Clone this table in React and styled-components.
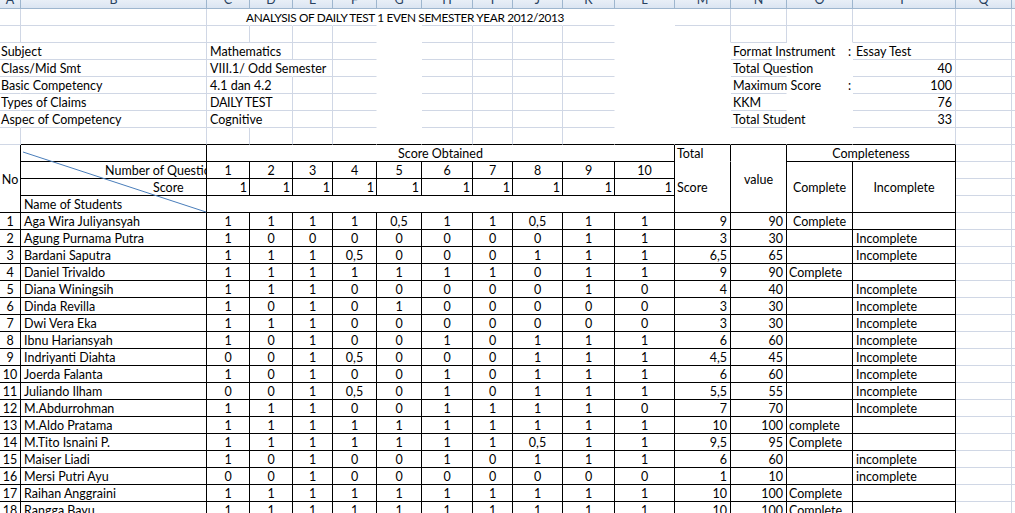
import React from "react";
import styled, { createGlobalStyle } from "styled-components";

// column widths A..R, rows are 17px like the sheet at 85% zoom
const COLS = [21, 186, 43, 43, 40, 44, 45, 51, 40, 50, 52, 60, 56, 56, 66, 103, 56, 60];
const LETTERS = "ABCDEFGHIJKLMNOPQR".split("");
const ROWS = 30;
const INK = "#000";
const GRID = "#d0d7e5";
const NONE = "transparent";

const GlobalStyle = createGlobalStyle`
  html, body { margin: 0; padding: 0; background: #fff; }
  body { overflow: hidden; font-family: Lato, "Liberation Sans", sans-serif; }
`;

const Page = styled.div`
  width: 1015px;
  height: 513px;
  overflow: hidden;
  background: #fff;
`;

const Sheet = styled.div`
  display: grid;
  grid-template-columns: ${COLS.map((w) => `${w}px`).join(" ")};
  grid-auto-rows: 17px;
  margin-top: -8px;
  font-size: 12.5px;
  color: #000;
`;

const ColHead = styled.div`
  grid-row: 1;
  display: flex;
  align-items: center;
  justify-content: center;
  background: linear-gradient(#f6f9fc, #dbe5f2);
  border-right: 1px solid #9eb6ce;
  border-bottom: 1px solid #9eb6ce;
  color: #27415f;
  line-height: 16px;
`;

const H = { left: "flex-start", center: "center", right: "flex-end" };
const V = { top: "flex-start", middle: "center", bottom: "flex-end" };

const Cell = styled.div`
  grid-column: ${(p) => p.$col + 1} / span ${(p) => p.$span};
  grid-row: ${(p) => p.$row + 2} / span ${(p) => p.$rows};
  display: flex;
  justify-content: ${(p) => H[p.$h]};
  align-items: ${(p) => V[p.$v]};
  padding: ${(p) => (p.$v === "middle" ? 2 : 0)}px ${(p) => p.$pr}px 0 ${(p) => p.$pl}px;
  border-right: 1px solid ${(p) => p.$r};
  border-bottom: 1px solid ${(p) => p.$b};
  overflow: ${(p) => (p.$clip ? "hidden" : "visible")};
  font-size: ${(p) => p.$size || "inherit"};
  letter-spacing: ${(p) => p.$ls}px;
  white-space: pre;
  line-height: 14px;
  min-width: 0;
`;

const Diagonal = styled.svg`
  grid-column: 2;
  grid-row: 10 / span 4;
  width: 100%;
  height: 100%;
  pointer-events: none;
`;

const students = [
  ["Aga Wira Juliyansyah", "1 1 1 1 0,5 1 1 0,5 1 1", "9", "90", "Complete", "", true],
  ["Agung Purnama Putra", "1 0 0 0 0 0 0 0 1 1", "3", "30", "", "Incomplete"],
  ["Bardani Saputra", "1 1 1 0,5 0 0 0 1 1 1", "6,5", "65", "", "Incomplete"],
  ["Daniel Trivaldo", "1 1 1 1 1 1 1 0 1 1", "9", "90", "Complete", ""],
  ["Diana Winingsih", "1 1 1 0 0 0 0 0 1 0", "4", "40", "", "Incomplete"],
  ["Dinda Revilla", "1 0 1 0 1 0 0 0 0 0", "3", "30", "", "Incomplete"],
  ["Dwi Vera Eka", "1 1 1 0 0 0 0 0 0 0", "3", "30", "", "Incomplete"],
  ["Ibnu Hariansyah", "1 0 1 0 0 1 0 1 1 1", "6", "60", "", "Incomplete"],
  ["Indriyanti Diahta", "0 0 1 0,5 0 0 0 1 1 1", "4,5", "45", "", "Incomplete"],
  ["Joerda Falanta", "1 0 1 0 0 1 0 1 1 1", "6", "60", "", "Incomplete"],
  ["Juliando Ilham", "0 0 1 0,5 0 1 0 1 1 1", "5,5", "55", "", "Incomplete"],
  ["M.Abdurrohman", "1 1 1 0 0 1 1 1 1 0", "7", "70", "", "Incomplete"],
  ["M.Aldo Pratama", "1 1 1 1 1 1 1 1 1 1", "10", "100", "complete", ""],
  ["M.Tito Isnaini P.", "1 1 1 1 1 1 1 0,5 1 1", "9,5", "95", "Complete", ""],
  ["Maiser Liadi", "1 0 1 0 0 1 0 1 1 1", "6", "60", "", "incomplete"],
  ["Mersi Putri Ayu", "0 0 1 0 0 0 0 0 0 0", "1", "10", "", "incomplete"],
  ["Raihan Anggraini", "1 1 1 1 1 1 1 1 1 1", "10", "100", "Complete", ""],
  ["Rangga Bayu", "1 1 1 1 1 1 1 1 1 1", "10", "100", "Complete", ""],
];

const info = [
  ["Subject", "Mathematics", "Format Instrument", ":", "Essay Test", "left"],
  ["Class/Mid Smt", "VIII.1/ Odd Semester", "Total Question", "", "40", "right"],
  ["Basic Competency", "4.1 dan 4.2", "Maximum Score", ":", "100", "right"],
  ["Types of Claims", "DAILY TEST", "KKM", "", "76", "right"],
  ["Aspec of Competency", "Cognitive", "Total Student", "", "33", "right"],
];

// white-filled columns hide the light gridlines around them
const plainCols = (row, col) =>
  (row <= 7 && (col === 6 || col === 11)) || (row >= 2 && row <= 7 && (col === 12 || col === 14));

// text spilling into the next cell hides the gridline it crosses
const overflowEdge = (row, col) => {
  if (row === 0) return col >= 2 && col <= 9;
  if (row >= 2 && row <= 6) {
    if (col === 0) return true;
    if (col === 2) return true;
    if (row === 3 && col === 3) return true;
    if (col === 13 && row !== 5) return true;
  }
  return false;
};

const gridRight = (row, col) => {
  if (plainCols(row, col) || plainCols(row, col + 1)) return NONE;
  if (overflowEdge(row, col)) return NONE;
  return GRID;
};

const gridBottom = (row, col) => {
  if (row === 7 && col >= 1 && col <= 15) return INK;
  if (plainCols(row, col) || plainCols(row + 1, col)) return NONE;
  return GRID;
};

function buildCells() {
  const cells = [];
  const put = (row, col, text = "", o = {}) =>
    cells.push({ row, col, text, span: 1, rows: 1, h: "left", v: "bottom", pl: 2, pr: 2, ls: 0, ...o });

  put(0, 2, "ANALYSIS OF DAILY TEST 1 EVEN SEMESTER YEAR 2012/2013", {
    pl: 39,
    size: "11.8px",
    ls: -0.35,
  });
  info.forEach(([a, c, n, colon, p, align], i) => {
    const row = 2 + i;
    put(row, 0, a, { pl: 1 });
    put(row, 2, c, { pl: 3, ls: c === c.toUpperCase() ? -0.3 : 0 });
    put(row, 13, n, { pl: 2 });
    if (colon) put(row, 14, colon, { h: "right", pr: 1 });
    put(row, 15, p, { h: align, pl: 3, pr: 3 });
  });

  // table header block
  put(8, 0, "No", { rows: 4, h: "center", v: "middle" });
  put(8, 1, "");
  put(9, 1, "Number of Questio", { pl: 84, clip: true });
  put(10, 1, "Score", { pl: 132 });
  put(11, 1, "Name of Students", { pl: 3 });
  put(8, 2, "Score Obtained", { span: 10, h: "center" });
  put(8, 12, "Total", { b: NONE, pl: 2 });
  put(9, 12, "Score", { rows: 3, v: "middle", pl: 2 });
  put(8, 13, "value", { rows: 4, h: "center", v: "middle" });
  put(8, 14, "Completeness", { span: 2, h: "center" });
  put(9, 14, "Complete", { rows: 3, h: "center", v: "middle" });
  put(9, 15, "Incomplete", { rows: 3, h: "center", v: "middle" });
  for (let i = 0; i < 10; i++) {
    put(9, 2 + i, String(i + 1), { h: "center" });
    put(10, 2 + i, "1", { h: "right", pr: 2 });
  }
  put(11, 2, "", { span: 10 });

  students.forEach(([name, scores, total, value, done, notDone, centered], k) => {
    const row = 12 + k;
    put(row, 0, String(k + 1), { h: "center", pl: 0, pr: 0 });
    put(row, 1, name, { pl: 3 });
    scores.split(" ").forEach((s, i) => put(row, 2 + i, s, { h: "center" }));
    put(row, 12, total, { h: "right", pr: 3 });
    put(row, 13, value, { h: "right", pr: 3 });
    put(row, 14, done, { h: centered ? "center" : "left", pl: 2 });
    put(row, 15, notDone, { pl: 3 });
  });

  // fill empty cells, respecting spans
  const taken = Array.from({ length: ROWS }, () => Array(COLS.length).fill(false));
  cells.forEach((c) => {
    for (let r = c.row; r < c.row + c.rows; r++)
      for (let k = c.col; k < c.col + c.span; k++) if (r < ROWS) taken[r][k] = true;
  });
  for (let r = 0; r < ROWS; r++)
    for (let k = 0; k < COLS.length; k++) if (!taken[r][k]) put(r, k, "");

  return cells.map((c) => {
    const lastCol = c.col + c.span - 1;
    const lastRow = c.row + c.rows - 1;
    const inTable = c.row >= 8 && lastCol <= 15;
    return {
      ...c,
      r: inTable ? INK : gridRight(lastRow, lastCol),
      b: c.b ?? (inTable ? INK : gridBottom(lastRow, c.col)),
    };
  });
}

const cells = buildCells();

export default function App() {
  return (
    <Page>
      <GlobalStyle />
      <Sheet>
        {LETTERS.map((l) => (
          <ColHead key={l}>{l}</ColHead>
        ))}
        {cells.map((c) => (
          <Cell
            key={`${c.row}-${c.col}`}
            $row={c.row}
            $col={c.col}
            $span={c.span}
            $rows={c.rows}
            $h={c.h}
            $v={c.v}
            $pl={c.pl}
            $pr={c.pr}
            $ls={c.ls}
            $size={c.size}
            $r={c.r}
            $b={c.b}
            $clip={c.clip}
          >
            {c.text}
          </Cell>
        ))}
        <Diagonal viewBox="0 0 186 68" preserveAspectRatio="none">
          <line x1="2" y1="7" x2="185" y2="67" stroke="#4a7ebb" strokeWidth="1" />
        </Diagonal>
      </Sheet>
    </Page>
  );
}
